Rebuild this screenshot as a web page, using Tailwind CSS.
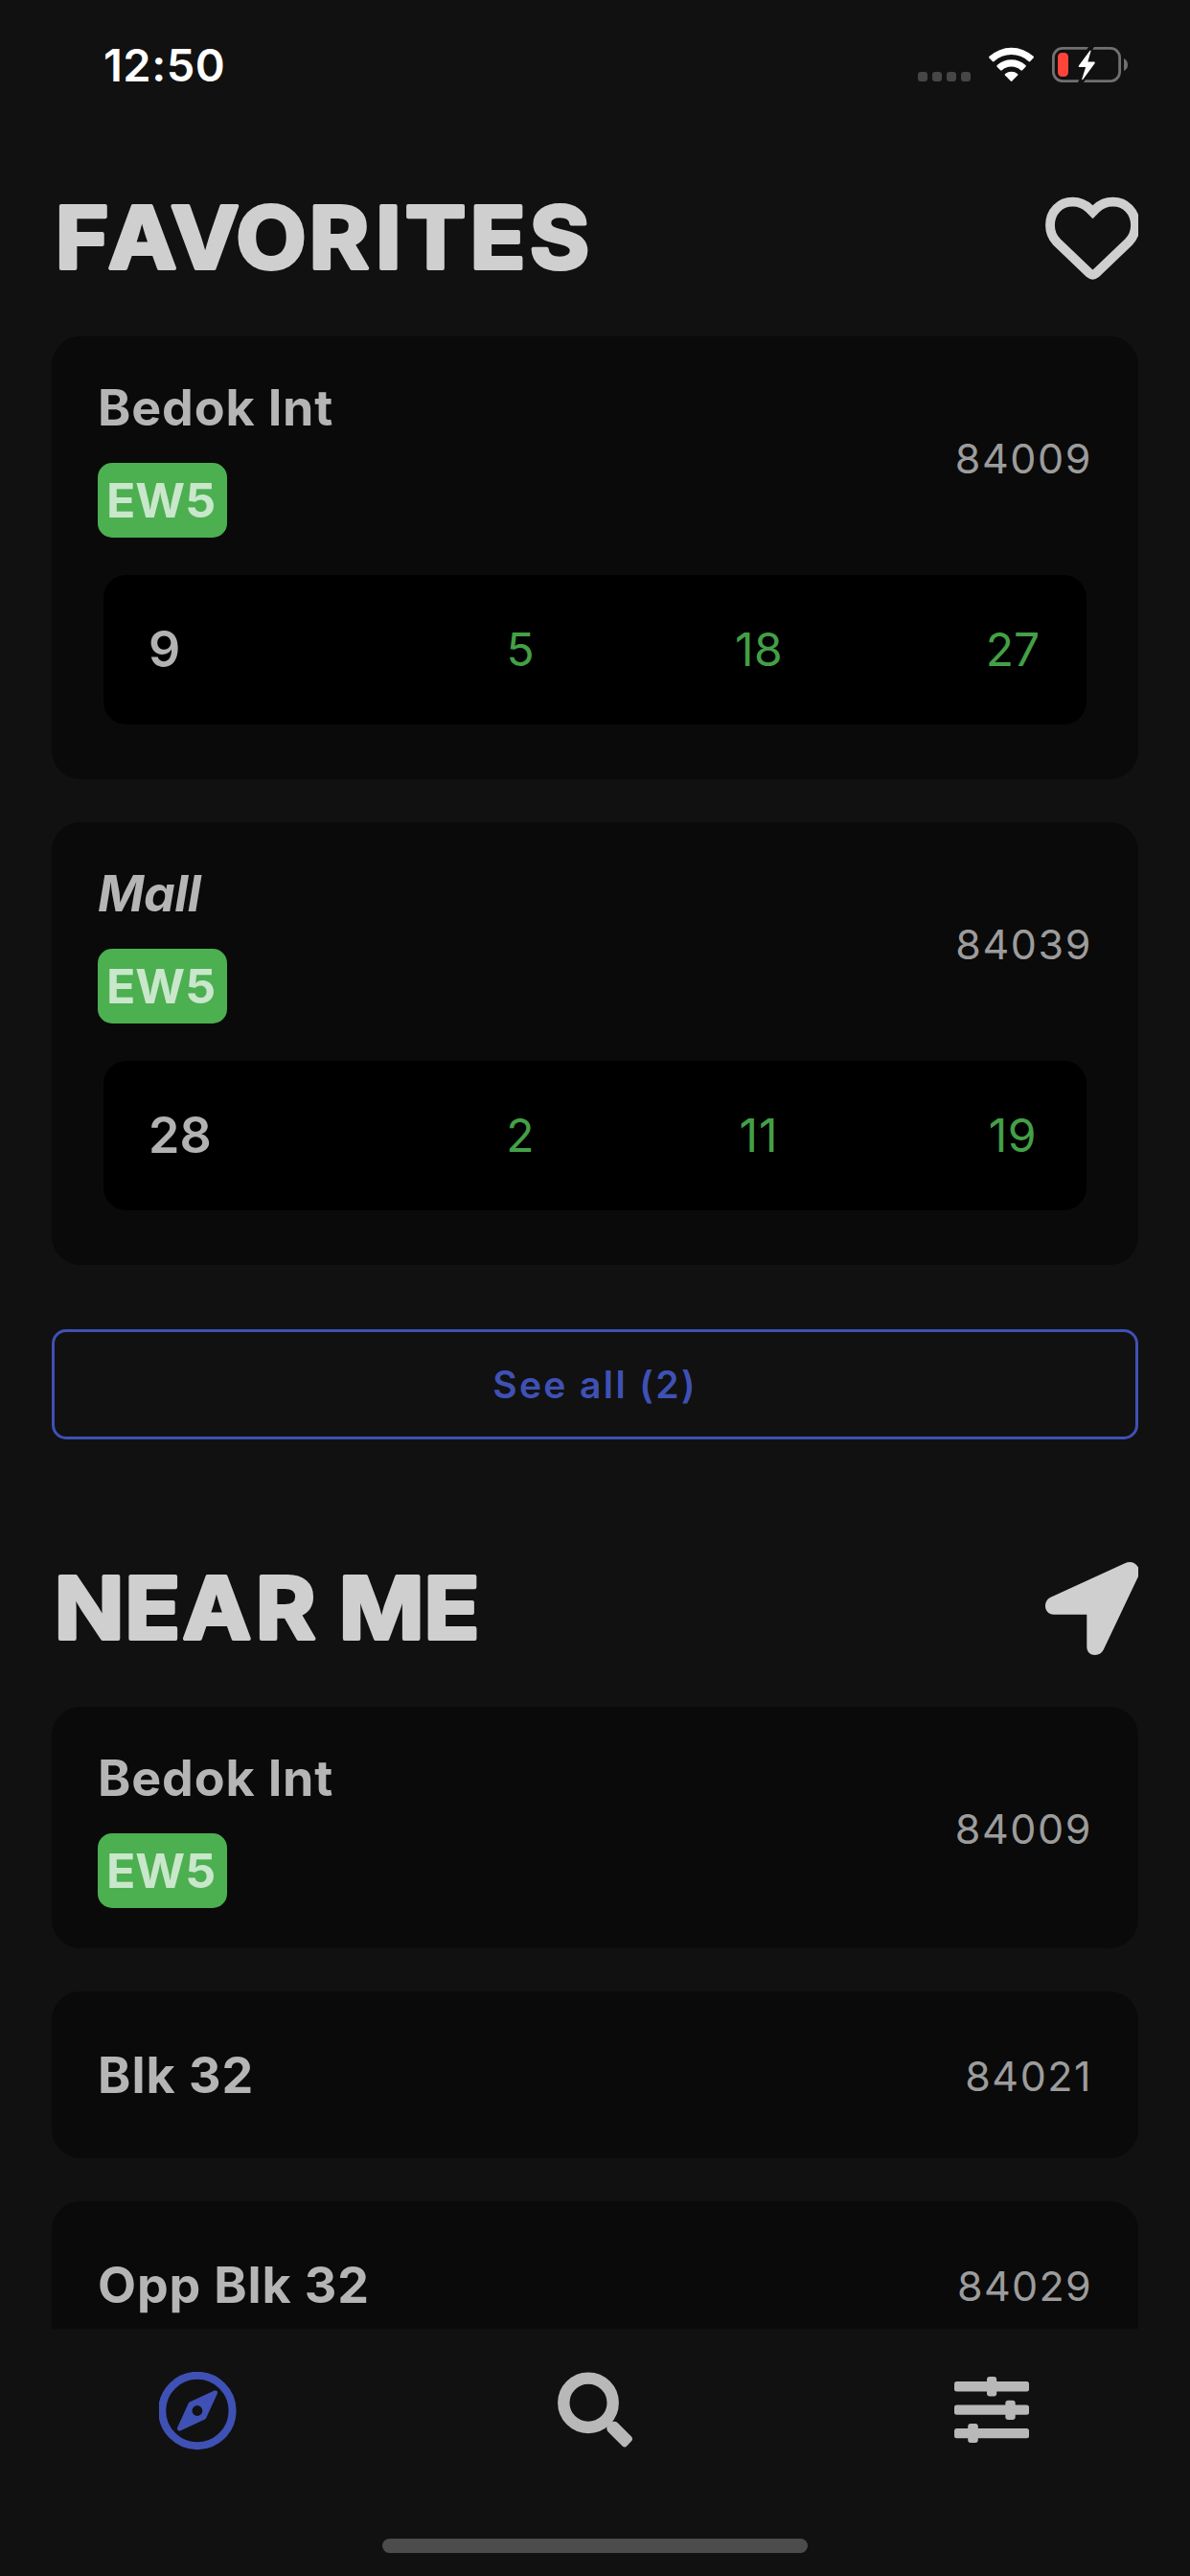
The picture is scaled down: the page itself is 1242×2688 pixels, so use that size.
<!DOCTYPE html>
<html lang="en">
<head>
<meta charset="utf-8">
<title>Bus stops</title>
<script src="https://cdn.jsdelivr.net/npm/@tailwindcss/browser@4"></script>
</head>
<body class="flex h-[2688px] w-[1242px] flex-col overflow-hidden bg-[#111111] font-['Inter','Liberation_Sans',sans-serif] text-[#b5b5b5]">

<!-- Status bar -->
<header class="flex h-[190px] shrink-0 items-start justify-between pt-[49px] pr-[65px] pl-[108px]">
  <time class="text-[47px] leading-[38px] font-semibold tracking-[0.5px] text-white">12:50</time>
  <div class="flex items-start gap-[19px]">
    <div class="mt-[26px] flex gap-[5px]">
      <span class="size-[10px] rounded-[3px] bg-[#464646]"></span>
      <span class="size-[10px] rounded-[3px] bg-[#464646]"></span>
      <span class="size-[10px] rounded-[3px] bg-[#464646]"></span>
      <span class="size-[10px] rounded-[3px] bg-[#464646]"></span>
    </div>
    <svg class="h-[37px] w-[47px]" viewBox="0 0 47 37" fill="#fff">
      <path d="M.5 11.6Q-.4 10.7.6 9.8A34 34 0 0 1 46.6 9.8Q47.4 10.7 46.5 11.6L43.2 15Q42.4 15.8 41.5 15A26.5 26.5 0 0 0 5.6 15Q4.7 15.8 3.9 15Z"/>
      <path d="M8.6 20.8Q7.8 19.9 8.7 19.1A22 22 0 0 1 38.4 19.1Q39.3 19.9 38.5 20.8L35 24.3Q34.2 25.1 33.3 24.3A14.6 14.6 0 0 0 13.8 24.3Q12.9 25.1 12.1 24.3Z"/>
      <path d="M16.9 29.6Q16.2 28.8 17.1 28A10 10 0 0 1 30 28Q30.9 28.8 30.2 29.6L24.3 35.6Q23.5 36.3 22.8 35.6Z"/>
    </svg>
    <svg class="h-[37px] w-[79px]" viewBox="0 0 79 37">
      <rect x="1.4" y="1.4" width="69.2" height="34.2" rx="9.5" fill="none" stroke="#707070" stroke-width="2.8"/>
      <path d="M75 12Q79 14 79 18.5T75 25Z" fill="#707070"/>
      <rect x="6" y="6" width="11" height="25" rx="4.5" fill="#ff453a"/>
      <path d="M38 0H44L40 6H34ZM27 37H33L37 31H30Z" fill="#111111"/>
      <path d="M39.6 3.8 27.9 19.6Q27.3 20.8 28.5 20.9H35.1L31.2 33.6Q31.2 34.8 32.2 34L44.7 17Q45.3 15.8 44 15.6H37.4L40.5 4.2Q40.3 3.2 39.6 3.8Z" fill="#fff"/>
    </svg>
  </div>
</header>

<main class="flex min-h-0 flex-1 flex-col overflow-hidden px-[54px]">

  <!-- Favorites -->
  <div class="flex h-[117px] shrink-0 items-center justify-between">
    <h1 class="h-[117px]">
      <svg class="h-[117px] w-[640px]" viewBox="0 -10 640 117" fill="#cfcfcf" stroke="#cfcfcf" stroke-width="4" stroke-linejoin="round" font-family="Inter, sans-serif" font-size="90" font-weight="700"><text transform="scale(1.06 1)" x="3.5 55.6 117.3 181.4 253.4 318.8 347.8 411.7 470.6" y="80">FAVORITES</text></svg>
    </h1>
    <svg class="size-[97px]" viewBox="0 0 97 97" fill="none" stroke="#cfcfcf" stroke-width="9.8">
      <path d="M49.5 21.3 46 17.8A25 25 0 0 0 28.5 10.7C15 10.7 5 21 5 35C5 42 7.6 48 12 52.5L46.3 85.3Q49.5 88 52.7 85.3L87 52.5C91.4 48 94 42 94 35C94 21 84 10.7 70.5 10.7A25 25 0 0 0 53 17.8Z"/>
    </svg>
  </div>

  <article class="mt-[44px] h-[462px] shrink-0 rounded-[30px] bg-[#0a0a0a] px-[48px] pt-[44px]">
    <div class="flex h-[168px] items-center justify-between">
      <div class="flex h-[168px] flex-col items-start">
        <h2 class="pt-px text-[52px] leading-[60px] font-bold tracking-[0.85px]">Bedok Int</h2>
        <span class="mt-[27px] h-[78px] w-[135px] rounded-[15px] bg-[#4caf50] pl-[9px] text-[50px] leading-[78px] font-bold text-[#c9e7cb]">EW5</span>
      </div>
      <span class="pb-[2px] text-[43px] leading-[52px] tracking-[1.6px] text-[#9c9c9c]">84009</span>
    </div>
    <div class="mx-[6px] mt-[37px] flex h-[156px] items-center rounded-[24px] bg-black pl-[47px] text-[48px] text-[#43a047]">
      <span class="w-[355px] text-[52px] font-semibold text-[#b2b2b2]">9</span>
      <span class="w-[66px] text-center">5</span>
      <span class="ml-[183px] w-[66px] text-center tracking-[0.5px]">18</span>
      <span class="ml-[199px] w-[66px] text-center">27</span>
    </div>
  </article>

  <article class="mt-[45px] h-[462px] shrink-0 rounded-[30px] bg-[#0a0a0a] px-[48px] pt-[44px]">
    <div class="flex h-[168px] items-center justify-between">
      <div class="flex h-[168px] flex-col items-start">
        <h2 class="pt-px text-[52px] leading-[60px] font-bold tracking-[-0.5px] italic">Mall</h2>
        <span class="mt-[27px] h-[78px] w-[135px] rounded-[15px] bg-[#4caf50] pl-[9px] text-[50px] leading-[78px] font-bold text-[#c9e7cb]">EW5</span>
      </div>
      <span class="pb-[2px] text-[43px] leading-[52px] tracking-[1.6px] text-[#9c9c9c]">84039</span>
    </div>
    <div class="mx-[6px] mt-[37px] flex h-[156px] items-center rounded-[24px] bg-black pl-[47px] text-[48px] text-[#43a047]">
      <span class="w-[355px] text-[52px] font-semibold text-[#b2b2b2]">28</span>
      <span class="w-[66px] text-center">2</span>
      <span class="ml-[183px] w-[66px] text-center tracking-[1px]">11</span>
      <span class="ml-[199px] w-[66px] text-center tracking-[0.5px]">19</span>
    </div>
  </article>

  <button class="mt-[67px] h-[115px] shrink-0 rounded-[15px] border-[3px] border-[#3f51b5] pt-[2px] text-center text-[39px] font-semibold tracking-[2.4px] text-[#3f51b5]">See all (2)</button>

  <!-- Near me -->
  <div class="mt-[118px] flex h-[117px] shrink-0 items-center justify-between">
    <h1 class="h-[117px]">
      <svg class="h-[117px] w-[640px]" viewBox="0 -10 640 117" fill="#cfcfcf" stroke="#cfcfcf" stroke-width="4" stroke-linejoin="round" font-family="Inter, sans-serif" font-size="90" font-weight="700"><text transform="scale(1.06 1)" x="2.5 72 129.1 200.6 259 282.7 366.5" y="80">NEAR ME</text></svg>
    </h1>
    <svg class="size-[97px]" viewBox="0 0 97 97" fill="#cfcfcf">
      <path d="M8.7 54.8C3.5 54.8 0 50.5 0 46C0 42 2 38.4 5.5 36.8L83 1.2C88.5-1.2 93.5 0 97 5.5V15L60.7 91.6C59 95 56 97 52 97C47 97 43.3 93.5 43.3 88.5V54.8Z"/>
    </svg>
  </div>

  <article class="mt-[44px] h-[252px] shrink-0 rounded-[30px] bg-[#0a0a0a] px-[48px] pt-[44px]">
    <div class="flex h-[168px] items-center justify-between">
      <div class="flex h-[168px] flex-col items-start">
        <h2 class="pt-px text-[52px] leading-[60px] font-bold tracking-[0.85px]">Bedok Int</h2>
        <span class="mt-[27px] h-[78px] w-[135px] rounded-[15px] bg-[#4caf50] pl-[9px] text-[50px] leading-[78px] font-bold text-[#c9e7cb]">EW5</span>
      </div>
      <span class="pb-[2px] text-[43px] leading-[52px] tracking-[1.6px] text-[#9c9c9c]">84009</span>
    </div>
  </article>

  <article class="mt-[45px] flex h-[174px] shrink-0 items-center justify-between rounded-[30px] bg-[#0a0a0a] px-[48px]">
    <h2 class="pt-[2px] text-[52px] leading-[60px] font-bold tracking-[1px]">Blk 32</h2>
    <span class="pt-px text-[43px] leading-[52px] tracking-[1.5px] text-[#9c9c9c]">84021</span>
  </article>

  <article class="mt-[45px] flex h-[174px] shrink-0 items-center justify-between rounded-[30px] bg-[#0a0a0a] px-[48px]">
    <h2 class="pt-[2px] text-[52px] leading-[60px] font-bold tracking-[0.85px]">Opp Blk 32</h2>
    <span class="pt-px text-[43px] leading-[52px] tracking-[1.3px] text-[#9c9c9c]">84029</span>
  </article>
</main>

<!-- Tab bar -->
<nav class="flex h-[258px] shrink-0 flex-col items-center justify-between bg-[#111111] pt-[45px] pb-[24px]">
  <div class="grid w-full grid-cols-3 justify-items-center">
    <svg class="size-[82px]" viewBox="0 0 82 82">
      <circle cx="39.9" cy="40.5" r="36.7" fill="none" stroke="#3f51b5" stroke-width="8"/>
      <path d="M58.7 21.7 32.8 33.6 21.2 59.3 47 47.4Z" fill="#3f51b5" stroke="#3f51b5" stroke-width="4.6" stroke-linejoin="round"/>
      <circle cx="39.9" cy="40.5" r="5.4" fill="#111111"/>
    </svg>
    <svg class="h-[82px] w-[78px]" viewBox="0 0 78 82">
      <circle cx="32" cy="32.3" r="25.7" fill="none" stroke="#b8b8b8" stroke-width="12.4"/>
      <path d="M53 53 57 51.7H59Q61 51.7 62.5 53L76.8 67.3Q79.3 70 76.8 72.6L72.4 77.2Q70 79.6 67.4 77.2L52.6 62.5Q51.3 61 51.3 59.3V57Z" fill="#b8b8b8"/>
    </svg>
    <svg class="h-[82px] w-[78px]" viewBox="0 0 78 82" fill="#b8b8b8">
      <rect x="0" y="10.1" width="78" height="10.4" rx="2.5"/>
      <rect x="34" y="5" width="10.2" height="20.5" rx="3"/>
      <rect x="0" y="34.4" width="78" height="10.4" rx="2.5"/>
      <rect x="53.3" y="29.7" width="10.4" height="20.3" rx="3"/>
      <rect x="0" y="59" width="78" height="10.2" rx="2.5"/>
      <rect x="14.2" y="54" width="10.6" height="20" rx="3"/>
    </svg>
  </div>
  <div class="h-[15px] w-[444px] rounded-full bg-[#4c4c4c]"></div>
</nav>
</body>
</html>
